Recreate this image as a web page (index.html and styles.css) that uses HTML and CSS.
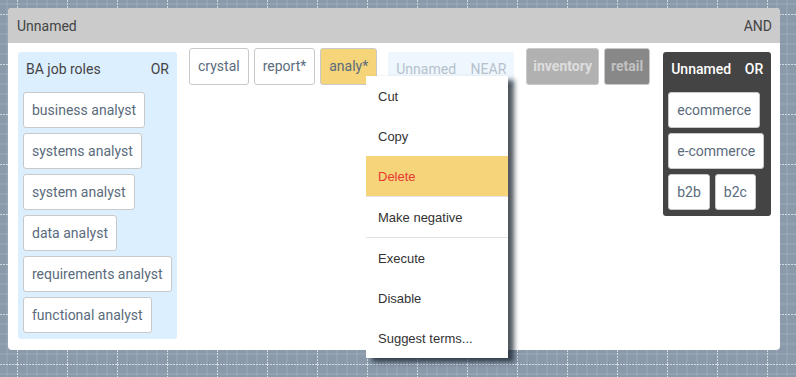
FILE: index.html
```html
<!DOCTYPE html>
<html lang="en">
<head>
  <meta charset="UTF-8" />
  <title>Query builder</title>
  <link rel="stylesheet" href="styles.css">
</head>
<body>
  <svg class="backdrop" width="100%" height="100%">
    <defs>
      <pattern id="grid" x="17" y="14" width="50" height="50" patternUnits="userSpaceOnUse">
        <path d="M10 0V50M20 0V50M30 0V50M40 0V50M0 10H50M0 20H50M0 30H50M0 40H50" stroke="#9aaaba" stroke-width="1" fill="none" />
        <path d="M0.5 0V50M0 0.5H50" stroke="#d2dae2" stroke-width="1" stroke-dasharray="2 1" fill="none" />
      </pattern>
    </defs>
    <rect width="100%" height="100%" fill="#8a9aab" />
    <rect width="100%" height="100%" fill="url(#grid)" />
  </svg>

  <div class="query">
    <div class="query-head">
      <span>Unnamed</span>
      <span>AND</span>
    </div>
    <div class="query-body">
      <div class="group group-blue group-roles">
        <div class="group-title"><span>BA job roles</span><span>OR</span></div>
        <div class="group-terms">
          <span class="term">business analyst</span>
          <span class="term">systems analyst</span>
          <span class="term">system analyst</span>
          <span class="term">data analyst</span>
          <span class="term">requirements analyst</span>
          <span class="term">functional analyst</span>
        </div>
      </div>

      <span class="term term-top">crystal</span>
      <span class="term term-top">report*</span>
      <span class="term term-top term-selected">analy*</span>

      <div class="group group-faded group-near">
        <div class="group-title"><span>Unnamed</span><span>NEAR</span></div>
      </div>

      <span class="term term-top term-disabled">inventory</span>
      <span class="term term-top term-negative">retail</span>

      <div class="group group-dark group-commerce">
        <div class="group-title"><span>Unnamed</span><span>OR</span></div>
        <div class="group-terms">
          <span class="term">ecommerce</span>
          <span class="term">e-commerce</span>
          <span class="term">b2b</span>
          <span class="term">b2c</span>
        </div>
      </div>
    </div>
  </div>

  <ul class="menu">
    <li>Cut</li>
    <li>Copy</li>
    <li class="menu-danger">Delete</li>
    <li class="menu-split">Make negative</li>
    <li>Execute</li>
    <li>Disable</li>
    <li>Suggest terms...</li>
  </ul>
</body>
</html>
```

FILE: styles.css
```css
body {
  margin: 0;
  font-family: Roboto, "Liberation Sans", Arial, sans-serif;
  font-size: 14px;
  color: #444;
  position: relative;
  height: 377px;
  overflow: hidden;
}
.backdrop {
  position: absolute;
  left: 0;
  top: 0;
  z-index: 0;
}
.query {
  position: relative;
  z-index: 1;
  margin: 8px 0 0 8px;
  width: 772px;
  height: 342px;
  border-radius: 4px;
  overflow: hidden;
  background: #fff;
}
.query-head {
  height: 35px;
  background: #cbcbcb;
  display: flex;
  justify-content: space-between;
  align-items: center;
  padding: 0 8px 0 9px;
  color: #444;
}
.query-body {
  display: flex;
  align-items: flex-start;
  padding: 0 1px;
}
.term {
  display: inline-block;
  flex-shrink: 0;
  background: #fff;
  border: 1px solid #c9c9c9;
  border-radius: 3px;
  padding: 8px 8px;
  line-height: 18px;
  color: #5a6b7c;
  white-space: nowrap;
}
.term-top {
  margin: 5px 3px 0;
  padding-bottom: 9px;
}
.term-top + .term-top {
  margin-left: 2px;
}
.term-selected {
  background: #f5d47a;
}
.term-disabled {
  background: #b1b1b1;
  color: #dedede;
  font-weight: 700;
  padding-left: 6px;
  padding-right: 6px;
}
.term-negative {
  background: #888;
  color: #c2c2c2;
  font-weight: 700;
  padding-left: 6px;
  padding-right: 6px;
}
.group {
  flex-shrink: 0;
  margin: 9px 9px 0;
  border-radius: 3px;
}
.group-title {
  display: flex;
  justify-content: space-between;
  padding: 8px 8px 0;
  line-height: 18px;
  height: 32px;
}
.group-terms {
  display: flex;
  flex-wrap: wrap;
  gap: 5px;
  padding: 0 5px 6px;
}
.group-blue {
  background: #dcefff;
}
.group-roles {
  width: 159px;
}
.group-faded {
  background: #eff7fe;
  color: #b6c1cc;
  height: 36px;
}
.group-near {
  width: 126px;
  margin-left: 8px;
}
.group-dark {
  background: #444;
  color: #fff;
  font-weight: 500;
}
.group-dark .term {
  font-weight: 400;
}
.group-commerce {
  width: 108px;
  margin-left: 10px;
}
.menu {
  position: absolute;
  z-index: 2;
  left: 366px;
  top: 76px;
  width: 142px;
  margin: 0;
  padding: 0;
  list-style: none;
  background: #fff;
  font-family: "Liberation Sans", Arial, sans-serif;
  font-size: 13px;
  color: #333;
  box-shadow: 6px 4px 5px rgba(20, 30, 40, 0.75);
}
.menu li {
  height: 40px;
  line-height: 41px;
  padding: 0 12px;
}
.menu-danger {
  background: #f5d47a;
  color: #e53935;
  border-bottom: 1px solid #e2e2e2;
}
.menu-split {
  border-bottom: 1px solid #e2e2e2;
}
```
